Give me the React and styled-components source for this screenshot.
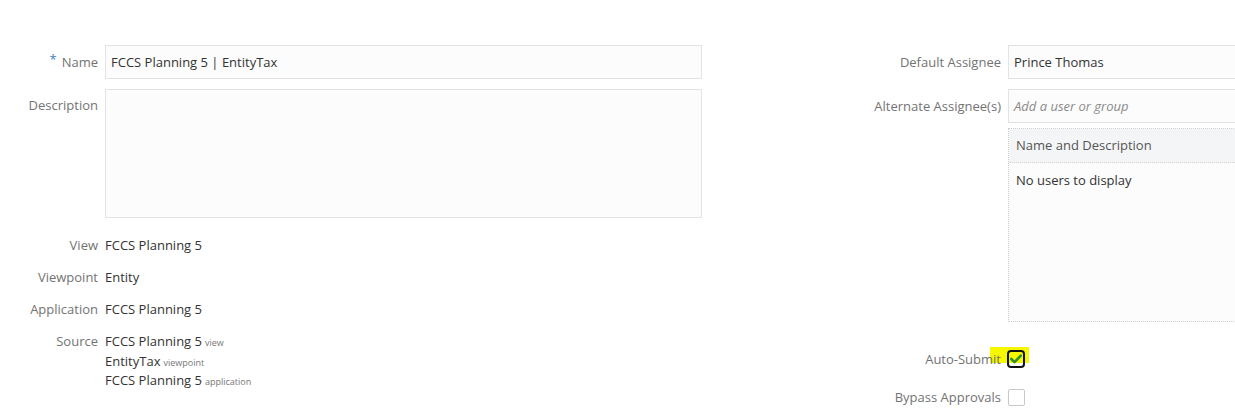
import React from "react";
import styled, { createGlobalStyle } from "styled-components";

const Global = createGlobalStyle`
  html, body { margin: 0; padding: 0; background: #fff; }
  body { font-family: "Open Sans", "Noto Sans", sans-serif; font-size: 13px; color: #333; overflow: hidden; }
`;

const Page = styled.div`
  display: flex;
  align-items: flex-start;
  width: 1235px;
  height: 419px;
  overflow: hidden;
  padding-top: 45px;
  box-sizing: border-box;
`;

const Form = styled.div`
  display: grid;
  grid-template-columns: ${(p) => p.$label}px ${(p) => p.$field}px;
  column-gap: 7px;
  margin-left: ${(p) => p.$offset || 0}px;
  flex-shrink: 0;
  align-items: start;
`;

const Label = styled.div`
  text-align: right;
  color: #737373;
  line-height: 18px;
  padding-top: ${(p) => p.$pt ?? 8}px;
  margin-top: ${(p) => p.$mt || 0}px;
  white-space: nowrap;
  position: relative;
  z-index: 1;
`;

const CheckLabel = styled(Label)`
  line-height: 20px;
  padding-top: 0;
`;

const Req = styled.span`
  color: #3f7fbf;
  font-size: 13px;
  margin-right: 5px;
  position: relative;
  top: -3px;
`;

const Input = styled.div`
  box-sizing: border-box;
  height: ${(p) => p.$h || 34}px;
  border: 1px solid #e3e3e3;
  background: #fcfcfc;
  padding: 0 5px;
  display: flex;
  align-items: center;
  margin-top: ${(p) => p.$mt || 0}px;
  color: ${(p) => (p.$placeholder ? "#8a8a8a" : "#333")};
  font-style: ${(p) => (p.$placeholder ? "italic" : "normal")};
`;

const Value = styled.div`
  line-height: 18px;
  padding-top: ${(p) => p.$pt ?? 8}px;
  margin-top: ${(p) => p.$mt || 0}px;
  color: #333;
`;

const SourceLine = styled.div`
  line-height: 19.5px;
  height: 19.5px;
  white-space: nowrap;
`;

const Small = styled.span`
  font-size: 9px;
  line-height: 0;
  color: #777;
  margin-left: 3px;
`;

const Table = styled.div`
  grid-column: 2;
  box-sizing: border-box;
  height: 194px;
  margin-top: 5px;
  border: 1px dotted #cfcfcf;
  background: #fcfcfc;
`;

const TableHead = styled.div`
  height: 34px;
  box-sizing: border-box;
  background: #f4f5f7;
  border-bottom: 1px dotted #d3d3d3;
  display: flex;
  align-items: center;
  padding: 0 0 1px 7px;
  color: #555;
`;

const TableEmpty = styled.div`
  padding: 8px 0 0 7px;
  line-height: 18px;
  color: #333;
`;

const CheckCell = styled.div`
  margin-top: ${(p) => p.$mt || 0}px;
  height: 20px;
  display: flex;
  align-items: center;
  position: relative;
`;

const Highlight = styled.div`
  position: absolute;
  left: -18px;
  top: -2px;
  width: 39px;
  height: 16px;
  background: #f7f700;
  z-index: 0;
`;

const Box = styled.div`
  position: relative;
  z-index: 1;
  box-sizing: border-box;
  width: ${(p) => (p.$checked ? 18 : 17)}px;
  height: ${(p) => (p.$checked ? 18 : 17)}px;
  border: ${(p) => (p.$checked ? "2px solid #111" : "1px solid #c9c9c9")};
  border-radius: ${(p) => (p.$checked ? 4 : 2)}px;
  background: ${(p) => (p.$checked ? "transparent" : "#fff")};
  display: flex;
  align-items: center;
  justify-content: center;
  margin-left: ${(p) => (p.$checked ? -1 : 0)}px;
`;

const Check = () => (
  <svg width="12" height="10" viewBox="0 0 12 10">
    <path d="M1.3 5 L4.5 8.2 L10.8 1.6" fill="none" stroke="#2f8f2f" strokeWidth="2.6" strokeLinecap="round" strokeLinejoin="round" />
  </svg>
);

export default function App() {
  return (
    <>
      <Global />
      <Page>
        <Form $label={98} $field={597}>
          <Label><Req>*</Req>Name</Label>
          <Input>FCCS Planning 5 | EntityTax</Input>

          <Label $mt={10} $pt={7}>Description</Label>
          <Input $mt={10} $h={129} />

          <Label $mt={10}>View</Label>
          <Value $mt={10}>FCCS Planning 5</Value>

          <Label $pt={14}>Viewpoint</Label>
          <Value $pt={14}>Entity</Value>

          <Label $pt={14}>Application</Label>
          <Value $pt={14}>FCCS Planning 5</Value>

          <Label $pt={14}>Source</Label>
          <Value $pt={14}>
            <SourceLine>FCCS Planning 5<Small>view</Small></SourceLine>
            <SourceLine>EntityTax<Small>viewpoint</Small></SourceLine>
            <SourceLine>FCCS Planning 5<Small>application</Small></SourceLine>
          </Value>
        </Form>

        <Form $label={160} $field={300} $offset={139}>
          <Label>Default Assignee</Label>
          <Input>Prince Thomas</Input>

          <Label $mt={10}>Alternate Assignee(s)</Label>
          <Input $mt={10} $placeholder>Add a user or group</Input>

          <Table>
            <TableHead>Name and Description</TableHead>
            <TableEmpty>No users to display</TableEmpty>
          </Table>

          <CheckLabel $mt={27}>Auto-Submit</CheckLabel>
          <CheckCell $mt={27}>
            <Highlight />
            <Box $checked><Check /></Box>
          </CheckCell>

          <CheckLabel $mt={18}>Bypass Approvals</CheckLabel>
          <CheckCell $mt={18}>
            <Box />
          </CheckCell>
        </Form>
      </Page>
    </>
  );
}
